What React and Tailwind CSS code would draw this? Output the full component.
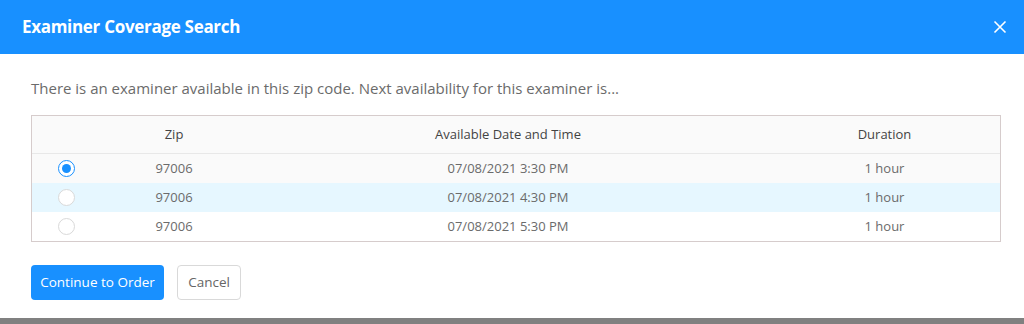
import React, { useState } from "react";

const rows = [
    { id: 1, zip: "97006", date: "07/08/2021 3:30 PM", duration: "1 hour" },
    { id: 2, zip: "97006", date: "07/08/2021 4:30 PM", duration: "1 hour" },
    { id: 3, zip: "97006", date: "07/08/2021 5:30 PM", duration: "1 hour" },
];

const Radio = ({ checked }) => (
    <span
        className={
            "inline-flex items-center justify-center w-[17px] h-[17px] rounded-full border bg-white " +
            (checked ? "border-[#1890ff]" : "border-[#d9d9d9]")
        }
    >
        {checked ? <span className="w-[9px] h-[9px] rounded-full bg-[#1890ff]" /> : null}
    </span>
);

const App = () => {
    const [selected, setSelected] = useState(1);

    return (
        <div className="w-[1024px] h-[324px] bg-white flex flex-col font-['Open_Sans',sans-serif] overflow-hidden">
            <div className="h-[54px] bg-[#1890ff] flex items-center justify-between pl-[22px] pr-[12px]">
                <h2 className="text-white text-[17px] font-bold tracking-[-0.3px]">Examiner Coverage Search</h2>
                <button className="text-white p-1">
                    <svg width="16" height="16" viewBox="0 0 16 16" fill="none" stroke="currentColor" strokeWidth="1.6">
                        <path d="M2.5 2.5 L13.5 13.5 M13.5 2.5 L2.5 13.5" />
                    </svg>
                </button>
            </div>

            <div className="flex-1 px-[31px] pt-[23px]">
                <p className="text-[15px] text-[#6b6b6b] leading-[22px]">
                    There is an examiner available in this zip code. Next availability for this examiner is...
                </p>

                <div className="mt-[16px] w-[970px] border border-[#d6cccc]">
                    <div className="grid grid-cols-[69px_146px_522px_1fr] h-[38px] items-center bg-[#fafafa] border-b border-[#e8e8e8] text-[13px] text-[#444] font-medium">
                        <span />
                        <span className="text-center">Zip</span>
                        <span className="text-center">Available Date and Time</span>
                        <span className="text-center">Duration</span>
                    </div>
                    {rows.map((row, index) => (
                        <div
                            key={row.id}
                            onClick={() => setSelected(row.id)}
                            className={
                                "grid grid-cols-[69px_146px_522px_1fr] items-center h-[29px] text-[13px] text-[#6b6b6b] cursor-pointer " +
                                (index === 0 ? "bg-[#fafafa]" : index === 1 ? "bg-[#e6f7ff]" : "bg-white")
                            }
                        >
                            <span className="flex justify-center">
                                <Radio checked={selected === row.id} />
                            </span>
                            <span className="text-center">{row.zip}</span>
                            <span className="text-center">{row.date}</span>
                            <span className="text-center">{row.duration}</span>
                        </div>
                    ))}
                </div>

                <div className="flex gap-[13px] mt-[23px]">
                    <button className="h-[35px] w-[133px] rounded-[4px] bg-[#1890ff] text-white text-[13.5px]">
                        Continue to Order
                    </button>
                    <button className="h-[35px] w-[64px] rounded-[4px] bg-white border border-[#d9d9d9] text-[#666] text-[13.5px]">
                        Cancel
                    </button>
                </div>
            </div>

            <div className="h-[6px] bg-[#808080]" />
        </div>
    );
};

export default App;
